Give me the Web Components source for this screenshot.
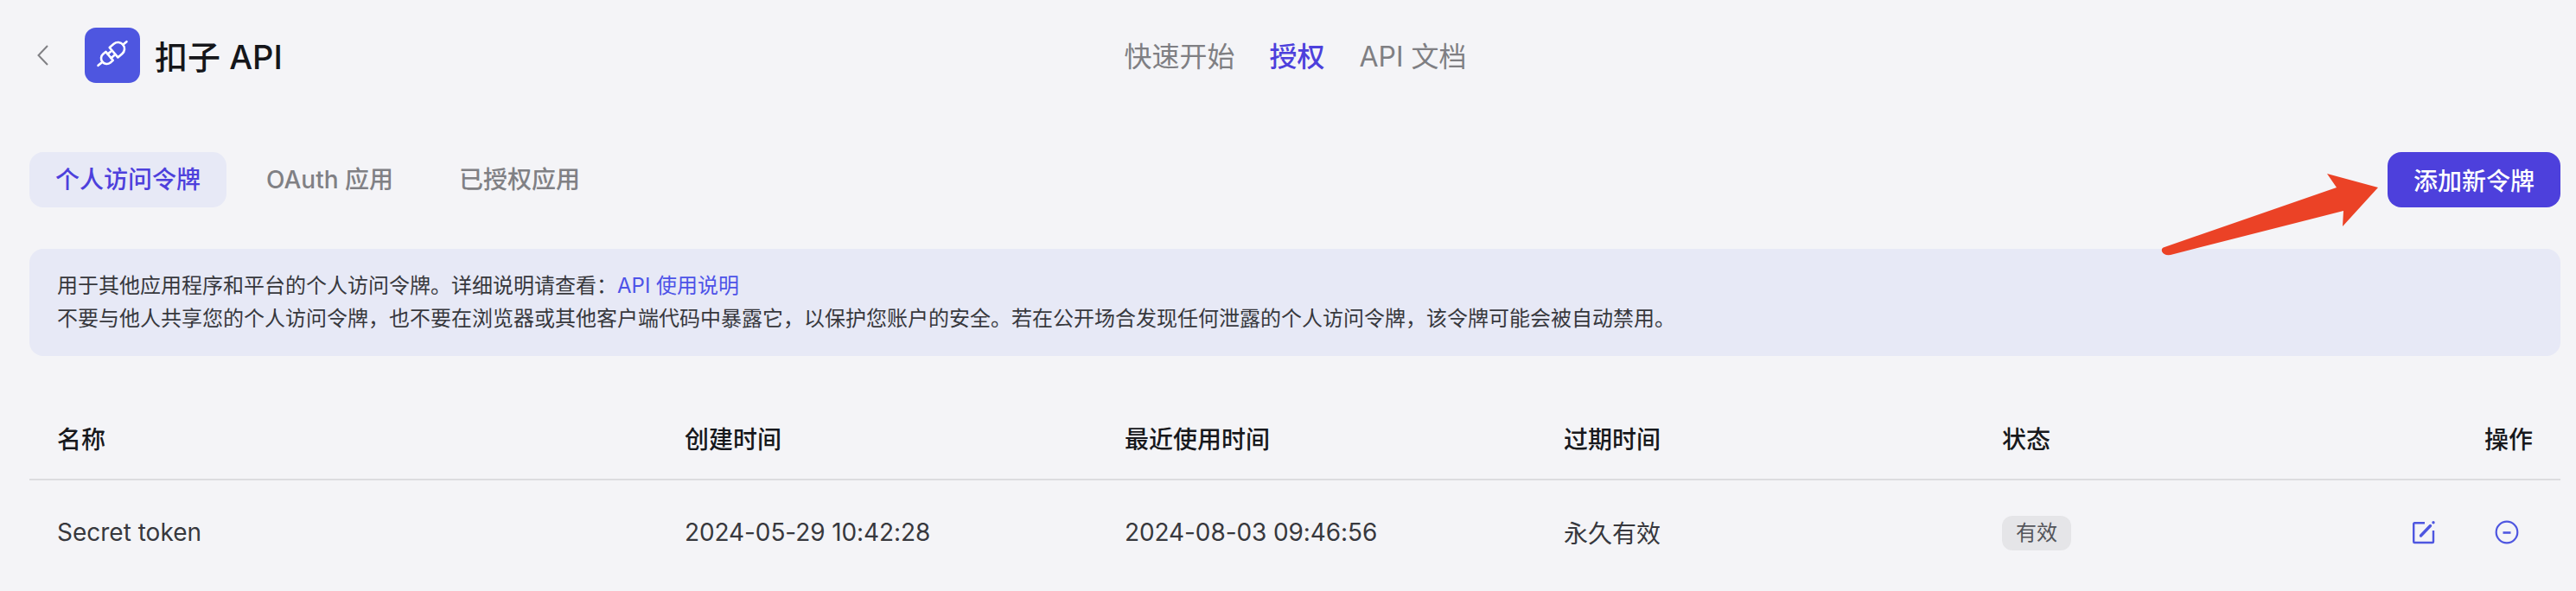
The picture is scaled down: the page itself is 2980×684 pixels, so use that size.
<!doctype html>
<html lang="zh">
<head>
<meta charset="utf-8">
<title>扣子 API</title>
<style>
html,body{ margin:0; background:#F4F4F7 }
body{ font-family:Inter,"Noto Sans CJK SC",sans-serif; color:#1c1d23; position:relative; height:684px; overflow:hidden }
</style>
</head>
<body>
<api-header></api-header>
<api-tabs></api-tabs>
<api-notice>
  <span>用于其他应用程序和平台的个人访问令牌。详细说明请查看：<a href="#">API 使用说明</a></span>
  <span>不要与他人共享您的个人访问令牌，也不要在浏览器或其他客户端代码中暴露它，以保护您账户的安全。若在公开场合发现任何泄露的个人访问令牌，该令牌可能会被自动禁用。</span>
</api-notice>
<token-table></token-table>
<hint-arrow></hint-arrow>

<script>
class ApiHeader extends HTMLElement{
  constructor(){
    super();
    this.attachShadow({mode:"open"}).innerHTML = `
<style>
:host{ display:grid; grid-template-columns:1fr auto 1fr; align-items:center; padding:32px 26px 0 43px; height:64px }
.left{ display:flex; align-items:center }
.back{ width:13px; height:24px; display:block; margin-right:42px }
.logo{ width:64px; height:64px; border-radius:13px; background:#4E56E0; display:block; margin-right:17px }
h1{ margin:0; font-size:38px; height:64px; line-height:68px; font-weight:500; color:#15161a }
nav{ display:flex; gap:40px; font-size:32px; height:64px; line-height:68px; color:#7f7f83 }
nav a{ color:inherit; text-decoration:none }
nav a.on{ color:#4D40DC; font-weight:500 }
</style>
<div class="left">
  <svg class="back" viewBox="0 0 13 24" fill="none" stroke="#808084" stroke-width="2"><path d="M12 1 1.500 12 12 23"/></svg>
  <svg class="logo" viewBox="0 0 64 64">
    <g transform="translate(32 30) rotate(-40)" fill="none" stroke="#fff" stroke-width="2.600" stroke-linecap="round" stroke-linejoin="round">
      <path d="M-21.500 0H-15"/>
      <path d="M-4.500-6.500H-8.500A6.500 6.500 0 0 0-15 0 6.500 6.500 0 0 0-8.500 6.500H-4.500Z"/>
      <path d="M-4.500-3H0M-4.500 3H0"/>
      <path d="M2-7.500H8.500A7.500 7.500 0 0 1 16 0 7.500 7.500 0 0 1 8.500 7.500H2Z"/>
      <path d="M16 0H21.500"/>
    </g>
  </svg>
  <h1>扣子 API</h1>
</div>
<nav>
  <a href="#">快速开始</a>
  <a href="#" class="on">授权</a>
  <a href="#">API 文档</a>
</nav>
<div></div>`;
  }
}
customElements.define("api-header", ApiHeader);

class ApiTabs extends HTMLElement{
  constructor(){
    super();
    this.attachShadow({mode:"open"}).innerHTML = `
<style>
:host{ display:flex; align-items:center; justify-content:space-between; margin-top:80px; padding:0 18px 0 34px }
.tabs{ display:flex; gap:16px }
.tab{ height:64px; line-height:64px; padding:0 30px; border-radius:16px; font-size:28px; font-weight:500; color:#808084 }
.tab.on{ background:#E7E9F6; color:#4D40DC }
button{ width:200px; height:64px; border:0; border-radius:16px; background:#4D40DC; color:#fff; font:500 28px Inter,"Noto Sans CJK SC",sans-serif; padding:0 }
</style>
<div class="tabs">
  <div class="tab on">个人访问令牌</div>
  <div class="tab">OAuth 应用</div>
  <div class="tab">已授权应用</div>
</div>
<button>添加新令牌</button>`;
  }
}
customElements.define("api-tabs", ApiTabs);

class ApiNotice extends HTMLElement{
  constructor(){
    super();
    this.attachShadow({mode:"open"}).innerHTML = `
<style>
:host{ display:flex; flex-direction:column; margin:48px 18px 0 34px; padding:24px 32px; border-radius:16px; background:#E7E9F6; font-size:24px; line-height:38px; color:#37383d }
::slotted(span){ display:block }
</style>
<slot></slot>`;
    // link stays in light DOM, so style it directly
    this.querySelector("a").style.cssText = "color:#4D53E8;text-decoration:none";
  }
}
customElements.define("api-notice", ApiNotice);

class TokenTable extends HTMLElement{
  constructor(){
    super();
    this.attachShadow({mode:"open"}).innerHTML = `
<style>
:host{ display:block; margin:32px 18px 0 34px }
.row{ display:grid; grid-template-columns:726px 509px 508px 507px 1fr auto; align-items:center; padding:0 32px; font-size:28px }
.head{ height:112px; padding-top:16px; border-bottom:2px solid #DCDCDF; box-sizing:border-box; font-weight:500; color:#17181c }
.body{ height:122px; padding-bottom:2px; box-sizing:border-box; color:#37383d }
.date{ letter-spacing:-.1px }
.state{ margin-top:2px }
.badge{ display:inline-block; width:80px; height:40px; line-height:40px; text-align:center; border-radius:12px; background:#E5E5E8; color:#54555b; font-size:24px }
.ops{ display:flex; gap:68px; margin-right:16px }
.ops svg{ display:block; width:28px; height:28px }
</style>
<div class="row head">
  <div>名称</div><div>创建时间</div><div>最近使用时间</div><div>过期时间</div><div>状态</div><div>操作</div>
</div>
<div class="row body">
  <div>Secret token</div>
  <div class="date">2024-05-29 10:42:28</div>
  <div class="date">2024-08-03 09:46:56</div>
  <div>永久有效</div>
  <div class="state"><span class="badge">有效</span></div>
  <div class="ops">
    <svg viewBox="0 0 28 28" fill="none" stroke="#4E56E0" stroke-width="2.400">
      <path d="M15 3.200H3.200A1 1 0 0 0 2.200 4.200V25A1 1 0 0 0 3.200 26H24A1 1 0 0 0 25 25V12"/>
      <path d="M10.500 18 21.500 6.500" stroke-width="3.400" stroke-linecap="round"/>
      <circle cx="25" cy="2.800" r="1.700" fill="#4E56E0" stroke="none"/>
    </svg>
    <svg viewBox="0 0 28 28" fill="none" stroke="#4E56E0" stroke-width="2.200">
      <circle cx="14" cy="14" r="12.300"/>
      <path d="M9.500 14.500H18.500" stroke-width="2.600"/>
    </svg>
  </div>
</div>`;
  }
}
customElements.define("token-table", TokenTable);

class HintArrow extends HTMLElement{
  constructor(){
    super();
    this.attachShadow({mode:"open"}).innerHTML = `
<style>
:host{ position:absolute; left:2495px; top:195px; width:262px; height:105px; display:block; pointer-events:none }
svg{ display:block }
</style>
<svg width="262" height="105" viewBox="2495 195 262 105">
  <path fill="#EB4226" d="M2751 217 2710 262 2711 244 2511 295Q2503 296 2501 291 2500 287 2504 286L2703 217 2692 201Z"/>
</svg>`;
  }
}
customElements.define("hint-arrow", HintArrow);
</script>
</body>
</html>
